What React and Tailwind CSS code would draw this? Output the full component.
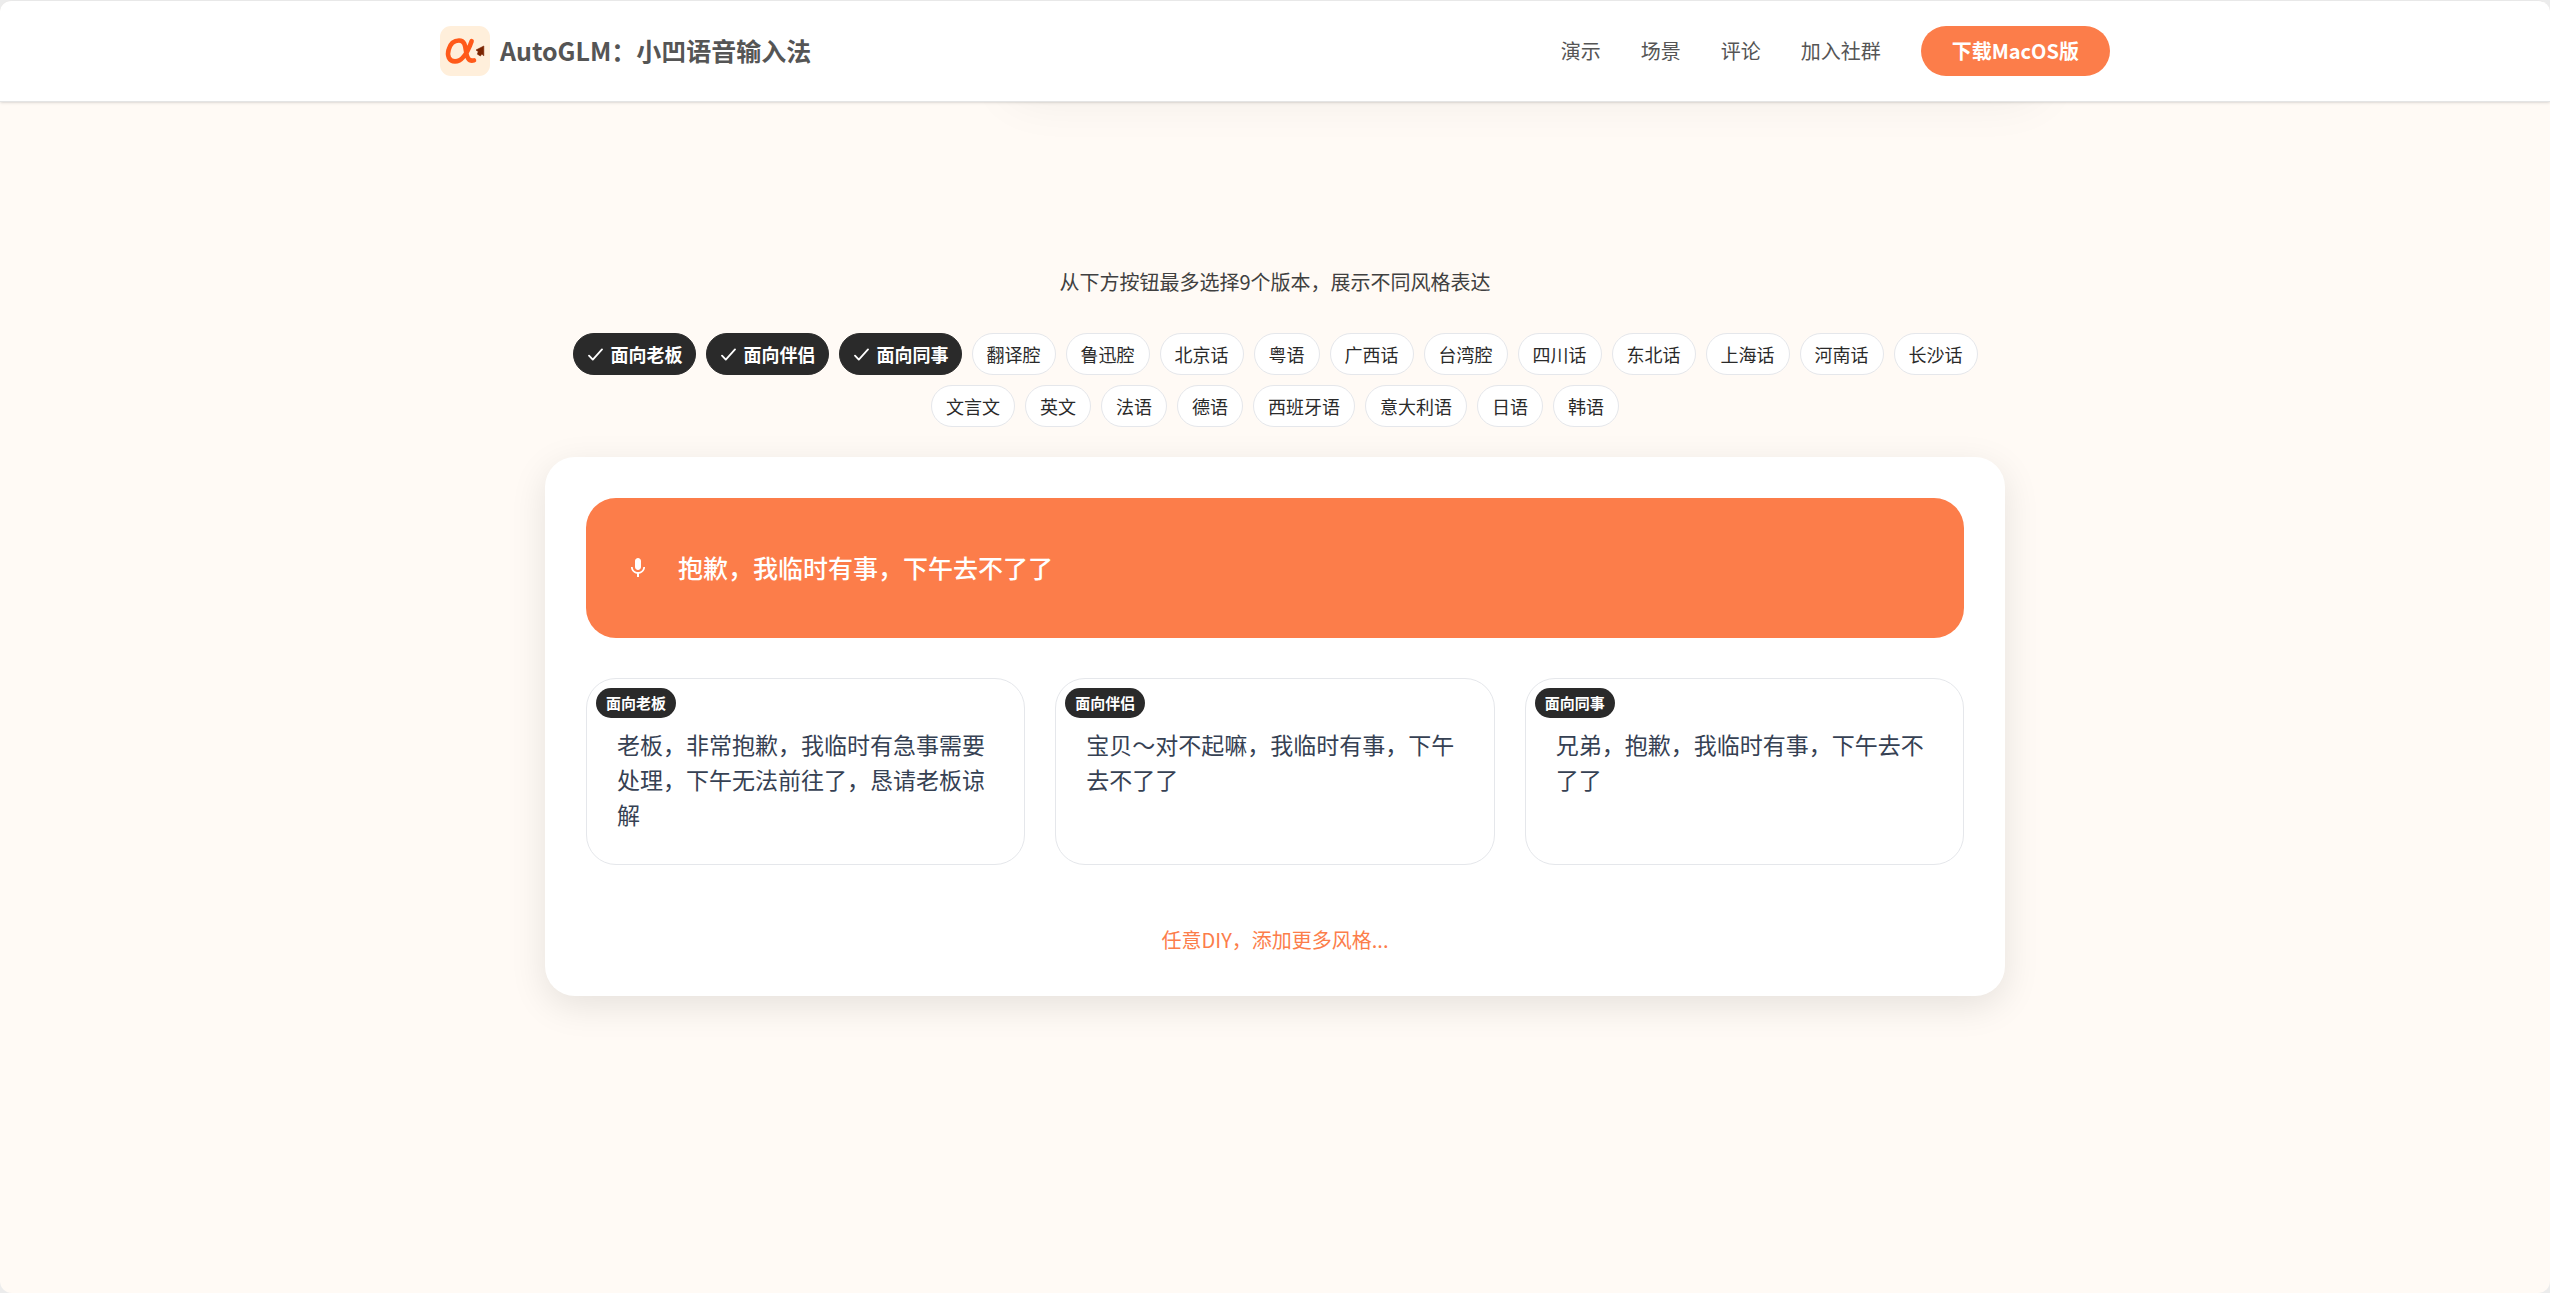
import React, { useState } from 'react';
import { MdMic } from 'react-icons/md';

const NAV_LINKS = ['演示', '场景', '评论', '加入社群'];

const STYLES = [
  '面向老板', '面向伴侣', '面向同事', '翻译腔', '鲁迅腔', '北京话', '粤语', '广西话',
  '台湾腔', '四川话', '东北话', '上海话', '河南话', '长沙话', '文言文', '英文',
  '法语', '德语', '西班牙语', '意大利语', '日语', '韩语',
];

const SOURCE_TEXT = '抱歉，我临时有事，下午去不了了';

const RESULTS = {
  面向老板: '老板，非常抱歉，我临时有急事需要处理，下午无法前往了，恳请老板谅解',
  面向伴侣: '宝贝～对不起嘛，我临时有事，下午去不了了',
  面向同事: '兄弟，抱歉，我临时有事，下午去不了了',
};

const MAX_SELECTED = 9;

const Logo = () => (
  <svg className="w-[50px] h-[50px] shrink-0" viewBox="0 0 50 50" fill="none">
    <rect width="50" height="50" rx="11" fill="#ffefdb" />
    <path
      d="M31.6 15.2C28.5 24 23 35.4 15 35.4C9 35.4 6.8 29.5 8.7 23.5C10.4 17.5 14.5 14.5 19 14.5C24.5 14.5 25.3 19.5 26 25C26.7 31 28.5 36 34 34.4"
      stroke="#ff5a1a"
      strokeWidth="4.6"
      strokeLinecap="round"
      strokeLinejoin="round"
    />
    <path d="M43.8 20L36 24L38.2 25.6L37.4 28.2L40.4 30L41.8 28L43.8 29.8Z" fill="#7a2400" stroke="#7a2400" strokeWidth="0.6" strokeLinejoin="round" />
  </svg>
);

const CheckIcon = () => (
  <svg className="w-[15px] h-[15px] shrink-0" viewBox="0 0 15 15" fill="none">
    <path d="M1 8.6L4.8 12.6L14 2.4" stroke="currentColor" strokeWidth="1.8" strokeLinecap="round" strokeLinejoin="round" />
  </svg>
);

const App = () => {
  const [selected, setSelected] = useState(['面向老板', '面向伴侣', '面向同事']);

  const toggleStyle = (name) => {
    if (selected.includes(name)) {
      setSelected(selected.filter((item) => item !== name));
    } else if (selected.length < MAX_SELECTED) {
      setSelected([...selected, name]);
    }
  };

  return (
    <div className="min-h-screen bg-[#ececec] font-['Noto_Sans_CJK_SC',sans-serif]">
      <div className="relative min-h-screen overflow-hidden rounded-xl border-t border-[#e8e8e8] bg-[#fffaf5]">
        <div className="absolute left-1/2 top-0 h-[90px] w-[1040px] -translate-x-[270px] rounded-[30px] shadow-[0_10px_50px_rgba(0,0,0,0.06)]" />

        {/* Header */}
        <header className="relative border-b border-[#e4e4e4] bg-white shadow-sm">
          <div className="mx-auto flex h-[100px] max-w-[1670px] items-center justify-between">
            <a href="#top" className="flex items-center gap-2.5 text-[25px] font-bold text-[#555555]">
              <Logo />
              AutoGLM：小凹语音输入法
            </a>
            <nav className="flex items-center gap-10 text-xl text-[#555555]">
              {NAV_LINKS.map((link) => (
                <a key={link} href={`#${link}`}>{link}</a>
              ))}
              <button className="h-[50px] rounded-full bg-[#fc7d4a] px-[31px] font-bold text-white">
                下载MacOS版
              </button>
            </nav>
          </div>
        </header>

        <main className="mx-auto max-w-[1460px] pt-[165px] pb-20">
          <p className="text-center text-xl leading-[30px] text-[#404040]">
            从下方按钮最多选择9个版本，展示不同风格表达
          </p>

          {/* Style chips */}
          <div className="mt-9 flex flex-wrap justify-center gap-2.5 px-5">
            {STYLES.map((name) =>
              selected.includes(name) ? (
                <button
                  key={name}
                  onClick={() => toggleStyle(name)}
                  className="flex h-[42px] items-center gap-2 rounded-full border border-[#2a2a2a] bg-[#2a2a2a] pl-3.5 pr-3 text-lg font-bold text-white"
                >
                  <CheckIcon />
                  {name}
                </button>
              ) : (
                <button
                  key={name}
                  onClick={() => toggleStyle(name)}
                  className="h-[42px] rounded-full border border-gray-200 bg-white px-3.5 text-lg text-[#2a2a2a]"
                >
                  {name}
                </button>
              )
            )}
          </div>

          {/* Demo panel */}
          <section className="mt-[30px] rounded-[30px] bg-white p-[41px] shadow-[0_10px_36px_rgba(0,0,0,0.1)]">
            <div className="flex h-[140px] items-center gap-7 rounded-[30px] bg-[#fc7d4a] px-10 text-white">
              <MdMic className="h-6 w-6" />
              <p className="text-[25px] font-medium">{SOURCE_TEXT}</p>
            </div>

            <div className="mt-10 grid grid-cols-3 gap-[30px]">
              {selected.map((name) => (
                <article key={name} className="relative rounded-[30px] border border-gray-200 px-[30px] pt-12 pb-8">
                  <h3 className="absolute left-[9px] top-[9px] h-[30px] rounded-full bg-[#2a2a2a] px-2.5 text-[15px] leading-[30px] font-bold text-white">
                    {name}
                  </h3>
                  <p className="text-[23px] leading-[35px] text-gray-700">{RESULTS[name] || SOURCE_TEXT}</p>
                </article>
              ))}
            </div>

            <a href="#diy" className="mt-[60px] block text-center text-xl leading-[30px] text-[#fc7d4a]">
              任意DIY，添加更多风格...
            </a>
          </section>
        </main>
      </div>
    </div>
  );
};

export default App;
